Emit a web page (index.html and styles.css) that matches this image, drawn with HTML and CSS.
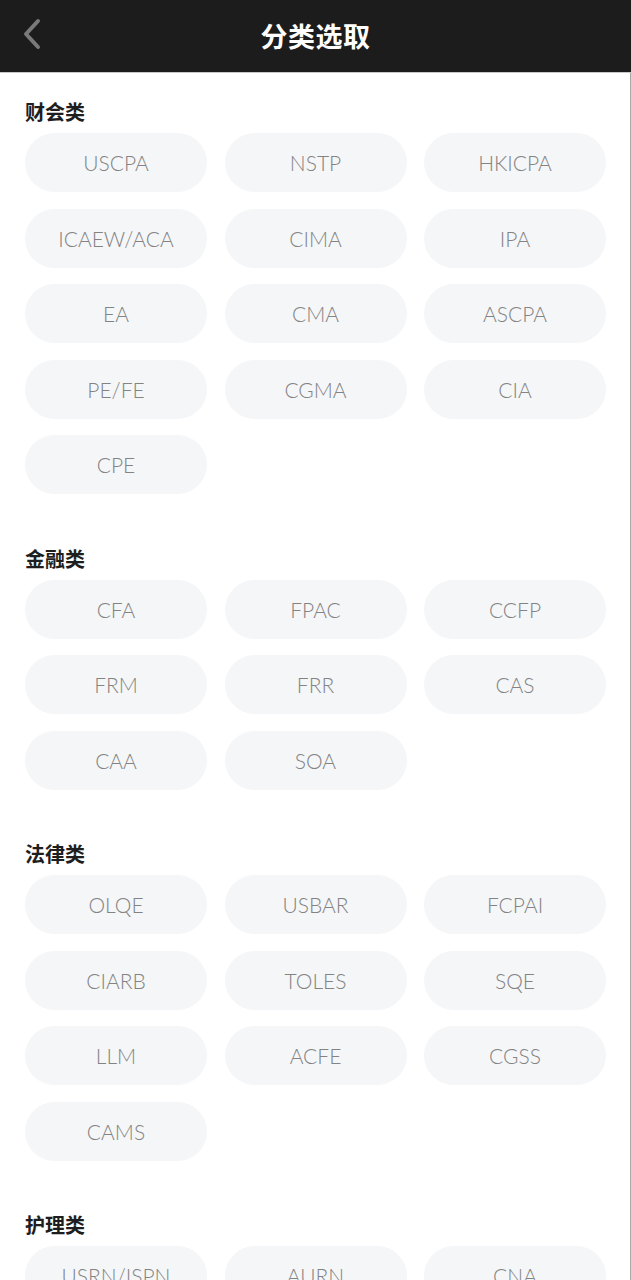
FILE: index.html
```html
<!DOCTYPE html>
<html lang="zh-CN">
<head>
<meta charset="utf-8">
<title>分类选取</title>
<link rel="stylesheet" href="styles.css">
</head>
<body>
<header class="topbar">
  <a class="back" aria-label="返回">
    <svg width="22" height="34" viewBox="0 0 22 34"><path d="M17 4 L5 17 L17 30" fill="none" stroke="#7a7a7a" stroke-width="4" stroke-linecap="round" stroke-linejoin="round"/></svg>
  </a>
  <h1 class="title">分类选取</h1>
</header>
<main class="content">
  <section class="group">
    <h2 class="group-title">财会类</h2>
    <div class="chips">
      <div class="chip">USCPA</div><div class="chip">NSTP</div><div class="chip">HKICPA</div>
      <div class="chip">ICAEW/ACA</div><div class="chip">CIMA</div><div class="chip">IPA</div>
      <div class="chip">EA</div><div class="chip">CMA</div><div class="chip">ASCPA</div>
      <div class="chip">PE/FE</div><div class="chip">CGMA</div><div class="chip">CIA</div>
      <div class="chip">CPE</div>
    </div>
  </section>
  <section class="group">
    <h2 class="group-title">金融类</h2>
    <div class="chips">
      <div class="chip">CFA</div><div class="chip">FPAC</div><div class="chip">CCFP</div>
      <div class="chip">FRM</div><div class="chip">FRR</div><div class="chip">CAS</div>
      <div class="chip">CAA</div><div class="chip">SOA</div>
    </div>
  </section>
  <section class="group">
    <h2 class="group-title">法律类</h2>
    <div class="chips">
      <div class="chip">OLQE</div><div class="chip">USBAR</div><div class="chip">FCPAI</div>
      <div class="chip">CIARB</div><div class="chip">TOLES</div><div class="chip">SQE</div>
      <div class="chip">LLM</div><div class="chip">ACFE</div><div class="chip">CGSS</div>
      <div class="chip">CAMS</div>
    </div>
  </section>
  <section class="group">
    <h2 class="group-title">护理类</h2>
    <div class="chips">
      <div class="chip">USRN/ISPN</div><div class="chip">AURN</div><div class="chip">CNA</div>
    </div>
  </section>
</main>
</body>
</html>
```
FILE: styles.css
```css
html, body {
  margin: 0;
  padding: 0;
  background: #ffffff;
}
body {
  font-family: "Noto Sans CJK SC", "Noto Sans", sans-serif;
  width: 631px;
  overflow-x: hidden;
}
.topbar {
  height: 72px;
  background: #1c1c1c;
  border-bottom: 1px solid #c8c8c8;
  display: flex;
  align-items: center;
  justify-content: center;
  position: relative;
}
.back {
  position: absolute;
  left: 21px;
  top: 17px;
  display: block;
  width: 22px;
  height: 34px;
}
.back svg { display: block; }
.title {
  margin: 0;
  color: #ffffff;
  font-size: 27px;
  font-weight: 700;
  line-height: 30px;
  letter-spacing: 0.5px;
}
.content {
  padding: 29px 25px 0 25px;
  border-right: 1px solid #a8a8a8;
  min-height: 1300px;
  box-sizing: border-box;
}
.group {
  margin-bottom: 54.5px;
}
.group-title {
  margin: 0 0 11px 0;
  font-size: 20px;
  line-height: 20px;
  height: 20px;
  font-weight: 700;
  color: #1e1e1e;
}
.chips {
  display: grid;
  grid-template-columns: repeat(3, 182px);
  column-gap: 17.5px;
  row-gap: 16.5px;
}
.chip {
  height: 59px;
  border-radius: 29.5px;
  background: #f5f6f8;
  display: flex;
  align-items: center;
  justify-content: center;
  font-family: "Lato", "Noto Sans", sans-serif;
  font-weight: 300;
  font-size: 21px;
  color: #838383;
}
```
